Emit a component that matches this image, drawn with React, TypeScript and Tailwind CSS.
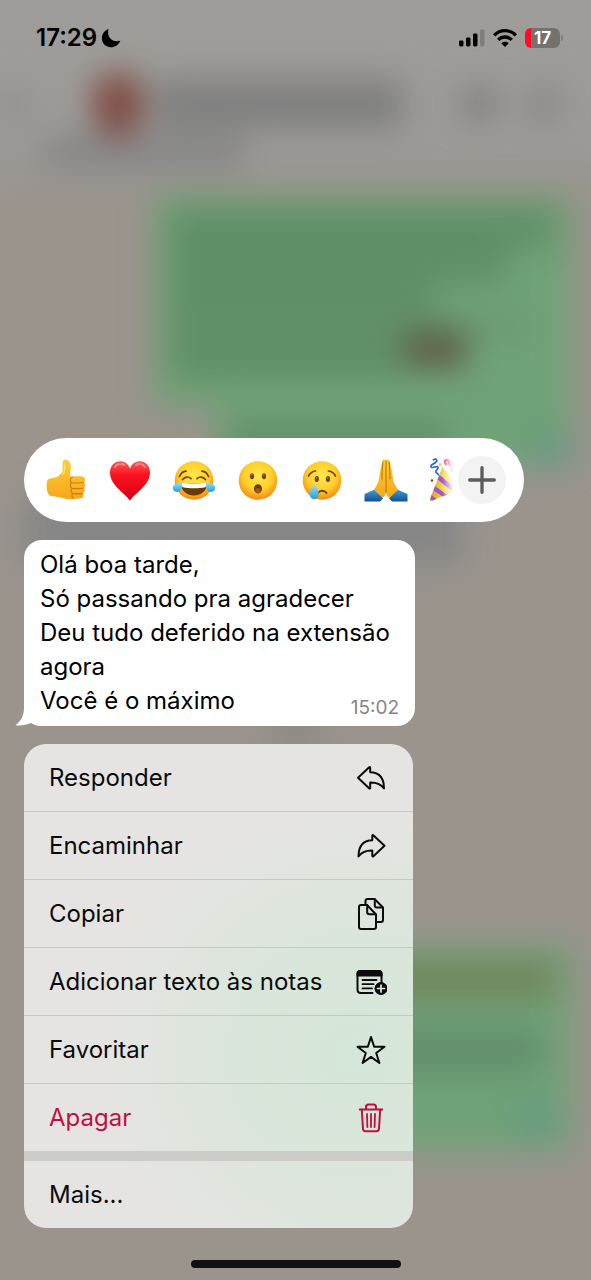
import type { ReactNode } from "react";

type MenuItem = {
  label: string;
  icon: ReactNode;
  danger?: boolean;
};

const stroke = {
  fill: "none",
  stroke: "currentColor",
  strokeWidth: 2,
  strokeLinecap: "round",
  strokeLinejoin: "round",
} as const;

function ReplyIcon() {
  return (
    <svg viewBox="0 0 32 32" className="size-8" {...stroke} aria-hidden="true">
      <path d="M3 15.7 14.2 5.2c.5-.4 1-.2 1 .5v4.6C23.500 10.500 29 15.500 29 26.500 26 21.500 22 20.300 15.200 20.400v5.400c0 .7-.6.900-1.100.4L3 15.700Z" />
    </svg>
  );
}

function ForwardIcon() {
  return (
    <svg viewBox="0 0 32 32" className="size-8" {...stroke} aria-hidden="true">
      <path d="M29.500 15.700 18.300 5.200c-.5-.4-1-.2-1 .5v4.600C9 10.500 3.500 15.500 3.500 26.500 6.500 21.500 10.500 20.300 17.300 20.400v5.400c0 .7.600.900 1.100.4L29.500 15.700Z" />
    </svg>
  );
}

function CopyIcon() {
  return (
    <svg viewBox="0 0 32 32" className="size-8" {...stroke} aria-hidden="true">
      <path d="M6 7h6l9 9.500V29q0 2-2 2H6q-2 0-2-2V9q0-2 2-2Z" />
      <path d="M12.200 7.300V14q0 2.300 2.300 2.300h6" />
      <path d="M10.500 6.500V3q0-2 2-2h7l8.500 8.500V22q0 2-2 2h-4.500" />
      <path d="M19.800 1.300V7.500q0 2 2 2h5.500" />
    </svg>
  );
}

function NoteIcon() {
  return (
    <svg viewBox="0 0 32 32" className="size-8" {...stroke} aria-hidden="true">
      <path d="M17.500 27H6q-3.500 0-3.500-3.500V8Q2.500 5 6 5h17q3.500 0 3.500 3v8.500" />
      <path d="M1.500 10.500V7.500Q1.500 4 5 4H24Q27.500 4 27.500 7.500V10.500Z" fill="currentColor" stroke="none" />
      <path d="M7.500 14h14M7.500 18.200h11M7.500 22.400h9.500" strokeWidth="1.800" />
      <circle cx="26" cy="22.500" r="6.500" fill="currentColor" stroke="none" />
      <path d="M26 19v7M22.500 22.500h7" stroke="#dfe7df" strokeWidth="1.700" />
    </svg>
  );
}

function StarIcon() {
  return (
    <svg viewBox="0 0 32 32" className="size-8" {...stroke} aria-hidden="true">
      <path d="m16 3 3.200 9.800h10.300l-8.300 6.200 3.200 10L16 22.900 7.600 29l3.200-10-8.300-6.200h10.300Z" />
    </svg>
  );
}

function TrashIcon() {
  return (
    <svg viewBox="0 0 32 32" className="size-8" {...stroke} aria-hidden="true">
      <path d="M4.700 7.500h22.600M11 7.300V5q0-2.500 2.500-2.500h5Q21 2.500 21 5v2.300" />
      <path d="m6.800 7.700 1.200 19q.2 2.500 2.500 2.500h11q2.300 0 2.500-2.500l1.200-19" />
      <path d="m12 12 .4 13M16 12v13M20 12l-.4 13" strokeWidth="1.800" />
    </svg>
  );
}

const menuItems: MenuItem[] = [
  { label: "Responder", icon: <ReplyIcon /> },
  { label: "Encaminhar", icon: <ForwardIcon /> },
  { label: "Copiar", icon: <CopyIcon /> },
  { label: "Adicionar texto às notas", icon: <NoteIcon /> },
  { label: "Favoritar", icon: <StarIcon /> },
  { label: "Apagar", icon: <TrashIcon />, danger: true },
];

function EmojiDefs() {
  return (
    <svg className="absolute size-0" aria-hidden="true">
      <defs>
        <radialGradient id="face" cx="50%" cy="38%" r="62%">
          <stop offset="0" stopColor="#ffe94f" />
          <stop offset="0.6" stopColor="#ffce2b" />
          <stop offset="1" stopColor="#f28a12" />
        </radialGradient>
        <linearGradient id="skin" x1="0" y1="0" x2="0" y2="1">
          <stop offset="0" stopColor="#ffcf33" />
          <stop offset="1" stopColor="#f5a61c" />
        </linearGradient>
        <linearGradient id="heart" x1="0" y1="0" x2="0" y2="1">
          <stop offset="0" stopColor="#ff5a55" />
          <stop offset="0.35" stopColor="#fb1220" />
          <stop offset="1" stopColor="#d40012" />
        </linearGradient>
        <linearGradient id="tear" x1="0" y1="0" x2="0" y2="1">
          <stop offset="0" stopColor="#a9e6fb" />
          <stop offset="1" stopColor="#1c9fe0" />
        </linearGradient>
        <linearGradient id="sleeve" x1="0" y1="0" x2="0" y2="1">
          <stop offset="0" stopColor="#3f9fe6" />
          <stop offset="1" stopColor="#14508f" />
        </linearGradient>
        <linearGradient id="cone" x1="0" y1="0" x2="1" y2="0">
          <stop offset="0" stopColor="#d9a21b" />
          <stop offset="0.5" stopColor="#f9dc5c" />
          <stop offset="1" stopColor="#e8b83a" />
        </linearGradient>
      </defs>
    </svg>
  );
}

function ThumbsUp() {
  return (
    <svg viewBox="0 0 44 44" className="size-11" aria-hidden="true">
      <path
        d="M3 23.500c.5-2.300 2-3.200 4.500-3.300 4.500-.1 8.200-2.400 10.200-5.500 1.300-2 .8-5.700.9-9.500C18.700 2 21 .8 23 1.800c3.600 1.800 4.600 6.300 3.300 11.200-.4 1.600-.3 3.500.2 5.500 3.800-.2 8-.4 11.500-.1 3 .3 4.200 4.300 1.600 5.900 2.500 1 2.500 4.600 0 5.700 1.900 1.300 1.500 4.300-.8 5.200 1.400 1.500.8 4.300-1.400 4.900-2.700.9-9.400 1.400-13.600 1-4.200-.4-5.600-1.800-9.300-2.200-3.300-.3-6.700.2-9-1.700C2.400 34.500 2.200 27.500 3 23.500Z"
        fill="url(#skin)"
      />
      <path
        d="M39.500 24.300c-3.500.7-7.500.8-11.500.4M39.300 30c-3.300.8-7.500.8-11.300.3M38.400 35.400c-3.200.7-6.700.6-9.900 0M28.500 19.200c-2 .4-2.900 4-1.200 5.500-1.500 1.400-1.200 4.400.6 5.600-1.400 1.400-1 4.100.8 5.200-1.300 1.200-.9 3.900.7 4.800"
        fill="none"
        stroke="#cf7a0c"
        strokeWidth="1.100"
        strokeLinecap="round"
      />
      <path d="M20.500 5.500c.4 4.500.2 8-1.500 11" fill="none" stroke="#ffe16a" strokeWidth="1.500" strokeLinecap="round" />
    </svg>
  );
}

function Heart() {
  return (
    <svg viewBox="0 0 44 44" className="size-11" aria-hidden="true">
      <path
        d="M22 42.500C15.500 34 2 27 2 14.500 2 8 6.500 3.300 12.200 3.300c4.300 0 7.800 2.500 9.800 7.200 2-4.700 5.500-7.200 9.800-7.200C37.500 3.300 42 8 42 14.500 42 27 28.500 34 22 42.500Z"
        fill="url(#heart)"
      />
      <path d="M7 9c2-3.300 6.500-4.300 9.300-2" fill="none" stroke="#ffa6a0" strokeWidth="1.800" strokeLinecap="round" opacity=".7" />
      <path d="M28 7c3-2.300 7-1.300 9 2" fill="none" stroke="#ffa6a0" strokeWidth="1.800" strokeLinecap="round" opacity=".7" />
    </svg>
  );
}

function Joy() {
  return (
    <svg viewBox="0 0 44 44" className="size-11" aria-hidden="true">
      <circle cx="22" cy="22.500" r="19.300" fill="url(#face)" />
      <g fill="none" stroke="#6b3f05" strokeWidth="1.700" strokeLinecap="round">
        <path d="M7.500 18.500C9 15 11 13.400 14 13.200M36.500 18.500C35 15 33 13.400 30 13.200" />
        <path d="M10.500 21.500c2.500-3 6-3.300 8.500-.8M25 20.700c2.500-2.500 6-2.200 8.500.8" />
      </g>
      <path d="M9 24.500c8 1.500 18 1.500 26 0 .4 7.500-5 13-13 13s-13.400-5.500-13-13Z" fill="#6b3906" />
      <path d="M9.500 24.600c8 1.500 17 1.500 25 0 .1 2-.3 3.300-1 4.600-7 1.500-16 1.500-23 0-.8-1.300-1.100-2.800-1-4.600Z" fill="#fff" />
      <path d="M9.500 23.500c1.500 5-.4 10.500-4.500 10.500-2.500 0-4.500-2-4.200-4.700.4-3.800 5.700-3 8.700-5.800ZM34.500 23.500c-1.500 5 .4 10.500 4.500 10.500 2.500 0 4.500-2 4.200-4.700-.4-3.800-5.700-3-8.700-5.800Z" fill="url(#tear)" />
    </svg>
  );
}

function Surprised() {
  return (
    <svg viewBox="0 0 44 44" className="size-11" aria-hidden="true">
      <circle cx="22" cy="22.500" r="19.300" fill="url(#face)" />
      <ellipse cx="16" cy="18.300" rx="2.100" ry="3" fill="#704308" />
      <ellipse cx="28" cy="18.300" rx="2.100" ry="3" fill="#704308" />
      <circle cx="15.700" cy="17" r=".8" fill="#c18b45" />
      <circle cx="27.700" cy="17" r=".8" fill="#c18b45" />
      <ellipse cx="22" cy="30.800" rx="4" ry="4.600" fill="#6b3906" />
      <ellipse cx="22" cy="32.500" rx="2.800" ry="2.500" fill="#9a5b17" />
    </svg>
  );
}

function Crying() {
  return (
    <svg viewBox="0 0 44 44" className="size-11" aria-hidden="true">
      <circle cx="22" cy="22.500" r="19.300" fill="url(#face)" />
      <g fill="none" stroke="#704308" strokeWidth="1.700" strokeLinecap="round">
        <path d="M8.500 18c1.500-3 3.700-4.600 7-5M28.500 13c3.300.4 5.500 2 7 5" />
        <path d="M18 35c2-3 6.500-3 8.500 0" strokeWidth="2" />
      </g>
      <ellipse cx="16.800" cy="21" rx="2.100" ry="3" fill="#704308" />
      <ellipse cx="28" cy="21" rx="2.100" ry="3" fill="#704308" />
      <circle cx="16.500" cy="19.800" r=".8" fill="#c18b45" />
      <circle cx="27.700" cy="19.800" r=".8" fill="#c18b45" />
      <path d="M14.500 25c1.500 4 4.200 7 4.200 10.500 0 3.500-2.200 5.700-4.700 5.700s-4.300-2.200-4.300-5.200c0-4 3.300-7 4.800-11Z" fill="url(#tear)" />
    </svg>
  );
}

function FoldedHands() {
  return (
    <svg viewBox="0 0 44 44" className="size-11" aria-hidden="true">
      <path d="M.5 36 12 31l7 9.500-3 3H.5ZM43.500 36 32 31l-7 9.500 3 3h15.500Z" fill="url(#sleeve)" />
      <path
        d="M21.600 2c-1-1.200-2.800-.8-3.200.8C16.500 9 15.800 15 14.800 22c-.6 4-3.300 7-5 9.800l8.700 8c2-1.300 3.100-3.300 3.500-5.300.4 2 1.500 4 3.500 5.300l8.700-8c-1.700-2.800-4.400-5.800-5-9.800-1-7-1.700-13-3.600-19.200-.4-1.600-2.200-2-3.200-.8Z"
        fill="url(#skin)"
      />
      <path d="M22 3v31M19 4c-.8 6-1 11.500-1 17M25 4c.8 6 1 11.500 1 17" fill="none" stroke="#bd6d09" strokeWidth="1" strokeLinecap="round" />
    </svg>
  );
}

function Party() {
  return (
    <svg viewBox="0 0 44 44" className="size-11" aria-hidden="true">
      <path d="M14.500 8.500 32 31.500 3.800 42.800c-1.500.4-2.200-.6-1.700-2Z" fill="url(#cone)" />
      <path d="m11.500 17 18.500 15-5 2-15.500-12.500ZM7 28l12 8.700-4.500 1.800-9-6ZM3.500 37l5 4-4 1.500-2.200-1Z" fill="#a153cf" />
      <path d="M5.500 1.800c3-1.700 4.500 1 2 2.700-2.700 2-5.500 2.500-4.300 4.500 1.300 2 6-2 6.800.3.600 2-3.300 2.700-2 5 .7 1.300 2.500.5 2.300 2.700" fill="none" stroke="#2569d5" strokeWidth="1.700" strokeLinecap="round" />
      <path d="M18 6c-2-2.500-.5-4.500 1.500-4 2.500.6.300 4 3 5 1.500.5 1.500 4 1.500 6" fill="none" stroke="#f13b7e" strokeWidth="2.500" strokeLinecap="round" />
      <circle cx="4" cy="22.500" r="1.300" fill="#c4264a" />
      <circle cx="12" cy="6.500" r="1.300" fill="#f4c52b" />
      <circle cx="23.500" cy="3.800" r="1.200" fill="#8f7be0" />
    </svg>
  );
}

const reactions = [
  { name: "Curtir", icon: <ThumbsUp /> },
  { name: "Amei", icon: <Heart /> },
  { name: "Haha", icon: <Joy /> },
  { name: "Uau", icon: <Surprised /> },
  { name: "Triste", icon: <Crying /> },
  { name: "Obrigado", icon: <FoldedHands /> },
];

function StatusBar() {
  return (
    <header className="flex h-[76px] items-center justify-between pr-7 pl-9">
      <div className="flex items-center gap-1">
        <time className="text-2xl leading-7 font-semibold">17:29</time>
        <svg viewBox="0 0 20 20" className="size-5" aria-hidden="true">
          <path d="M7.500 1C5.500 8.500 10.500 15 19.300 12.800 17.500 17 14 19.300 10 19.300 5 19.300.9 15.500.9 10.300.9 6 3.500 2.400 7.500 1Z" fill="#000" />
        </svg>
      </div>
      <div className="flex items-center gap-2">
        <svg viewBox="0 0 26 18" className="h-[18px] w-[26px]" aria-hidden="true">
          <rect x="0" y="11.500" width="4.500" height="6" rx="1.400" />
          <rect x="7" y="8.500" width="4.500" height="9" rx="1.400" />
          <rect x="14" y="4.500" width="4.500" height="13" rx="1.400" />
          <rect x="21" y="0.500" width="4.500" height="17" rx="1.400" fill="#7f7e7b" />
        </svg>
        <svg viewBox="0 0 24 18" className="h-[18px] w-6" aria-hidden="true">
          <g fill="none" stroke="#000" strokeWidth="3.300">
            <path d="M1.200 6.300c6-6.200 15.600-6.200 21.600 0" />
            <path d="M5.200 10.900c3.900-3.900 9.700-3.900 13.600 0" />
          </g>
          <path d="M8.300 14.200c2.200-1.900 5.200-1.900 7.400 0L12 17.900Z" />
        </svg>
        <div className="flex items-center gap-px">
          <span className="flex h-5 w-[35px] items-center justify-center rounded-[6px] bg-[linear-gradient(90deg,#fb0d24_6px,#73726f_6px)] text-[17px] leading-5 font-bold text-white">
            17
          </span>
          <span className="h-[6px] w-[2px] rounded-r bg-[#7f7e7b]" />
        </div>
      </div>
    </header>
  );
}

// Blurred conversation behind the menu
function ChatBackdrop() {
  return (
    <div className="absolute inset-0 overflow-hidden bg-[linear-gradient(#9f9d99_0px,#9c9b98_140px,#9a948d_200px,#9a948d_100%)]" aria-hidden="true">
      <div className="flex flex-col blur-[16px]">
        <div className="flex items-center pt-[72px]">
          <span className="h-7 w-7 bg-[#8f8e8b]" />
          <span className="ml-[65px] h-[64px] w-[50px] rounded-full bg-[#7f4a42]" />
          <span className="ml-3 h-12 grow bg-[#7f7f7f]" />
          <span className="ml-[60px] h-8 w-8 bg-[#7e7d7b]" />
          <span className="mx-8 h-8 w-8 bg-[#868583]" />
        </div>
        <div className="ml-11 h-8 w-[200px] bg-[#858585]" />
        <div className="mt-[28px] mr-5 ml-[154px] flex h-[210px] flex-col bg-[#70a277] py-3 pr-4 pl-4">
          <span className="h-10 bg-[#608f66]" />
          <span className="mr-12 h-9 bg-[#608f66]" />
          <span className="mr-[120px] h-9 bg-[#608f66]" />
          <span className="mr-7 h-3 w-auto bg-[#648f67]" />
          <div className="flex">
            <span className="h-12 w-[236px] bg-[#608f66]" />
            <span className="h-9 w-[60px] bg-[#5f5c46]" />
          </div>
        </div>
        <div className="mr-5 ml-[216px] flex h-[60px] items-end justify-between bg-[#70a277] pl-3">
          <span className="h-12 w-[220px] bg-[#64916b]" />
          <span className="h-8 w-10 bg-[#659b82]" />
        </div>
        <div className="mt-8 mr-[130px] ml-6 h-[66px] bg-[#868686]" />
        <div className="mt-[156px] h-5 w-12 self-center bg-[#84817c]" />
        <div className="mt-[206px] mr-5 ml-[154px] flex h-[204px] flex-col gap-7 bg-[#70a277] py-4 pr-4 pl-4">
          <span className="h-9 bg-[#71835a]" />
          <span className="mr-3 h-12 bg-[#638f6c]" />
          <span className="h-8 w-10 self-end bg-[#659a84]" />
        </div>
      </div>
    </div>
  );
}

function ReactionBar() {
  return (
    <div className="flex h-[84px] w-[500px] max-w-full items-center rounded-full bg-white pr-[18px] pl-5">
      <div className="flex min-w-0 grow items-center gap-5 overflow-hidden">
        {reactions.map((r) => (
          <button key={r.name} type="button" aria-label={r.name} className="shrink-0">
            {r.icon}
          </button>
        ))}
        <button
          type="button"
          aria-label="Festa"
          className="w-7 shrink-0 overflow-hidden [mask-image:linear-gradient(90deg,#000_50%,transparent_90%)]"
        >
          <span className="block w-11">
            <Party />
          </span>
        </button>
      </div>
      <button
        type="button"
        aria-label="Mais reações"
        className="flex size-12 shrink-0 items-center justify-center rounded-full bg-[#f3f3f3]"
      >
        <svg viewBox="0 0 28 28" className="size-7" aria-hidden="true">
          <path d="M14 1.700v24.600M1.700 14h24.600" stroke="#5c5c5c" strokeWidth="3.300" strokeLinecap="round" />
        </svg>
      </button>
    </div>
  );
}

function Message() {
  return (
    <article className="relative w-[391px] max-w-full rounded-[18px] bg-white px-4 py-2">
      <svg viewBox="0 0 30 30" className="absolute bottom-0 -left-[9px] size-[30px]" aria-hidden="true">
        <path d="M9 0v12C9 20 5.500 25.500.5 29.300 6 30 11.500 29 16 27c3 2 6 3 12 3V0Z" fill="#fff" />
      </svg>
      <div className="relative flex items-end justify-between">
        <p className="text-2xl leading-[34px] whitespace-nowrap">
          Olá boa tarde,
          <br />
          Só passando pra agradecer
          <br />
          Deu tudo deferido na extensão
          <br />
          agora
          <br />
          Você é o máximo
        </p>
        <time className="-ml-14 text-[19px] leading-5 text-[#858585]">15:02</time>
      </div>
    </article>
  );
}

function ContextMenu() {
  return (
    <nav className="w-[389px] max-w-full overflow-hidden rounded-[22px] bg-[#e6e4e2] bg-[radial-gradient(ellipse_260px_250px_at_85%_64%,#d4e7d8,#dae6db_45%,transparent)]">
      <ul>
        {menuItems.map((item) => (
          <li key={item.label} className="border-b border-[#c6c8c4] last:border-b-0">
            <button
              type="button"
              className={`flex h-[67px] w-full items-center justify-between pr-[26px] pl-[25px] text-left text-2xl leading-8 ${
                item.danger ? "text-[#c2103c]" : "text-[#0b0b0b]"
              }`}
            >
              {item.label}
              {item.icon}
            </button>
          </li>
        ))}
      </ul>
      <div className="h-[10px] bg-[#cbccc8]" />
      <button type="button" className="flex h-[67px] w-full items-center pl-[25px] text-2xl leading-8 text-[#0b0b0b]">
        Mais...
      </button>
    </nav>
  );
}

export default function App() {
  return (
    <div className="relative min-h-screen overflow-hidden font-[Inter,'Liberation_Sans',sans-serif] text-black">
      <ChatBackdrop />
      <EmojiDefs />
      <div className="relative flex min-h-screen flex-col">
        <StatusBar />
        <main className="flex grow flex-col items-start justify-end gap-[18px] px-6 pb-8">
          <ReactionBar />
          <Message />
          <ContextMenu />
        </main>
        <footer className="flex justify-center pb-3">
          <span className="h-2 w-[210px] rounded-full bg-[#111]" />
        </footer>
      </div>
    </div>
  );
}
